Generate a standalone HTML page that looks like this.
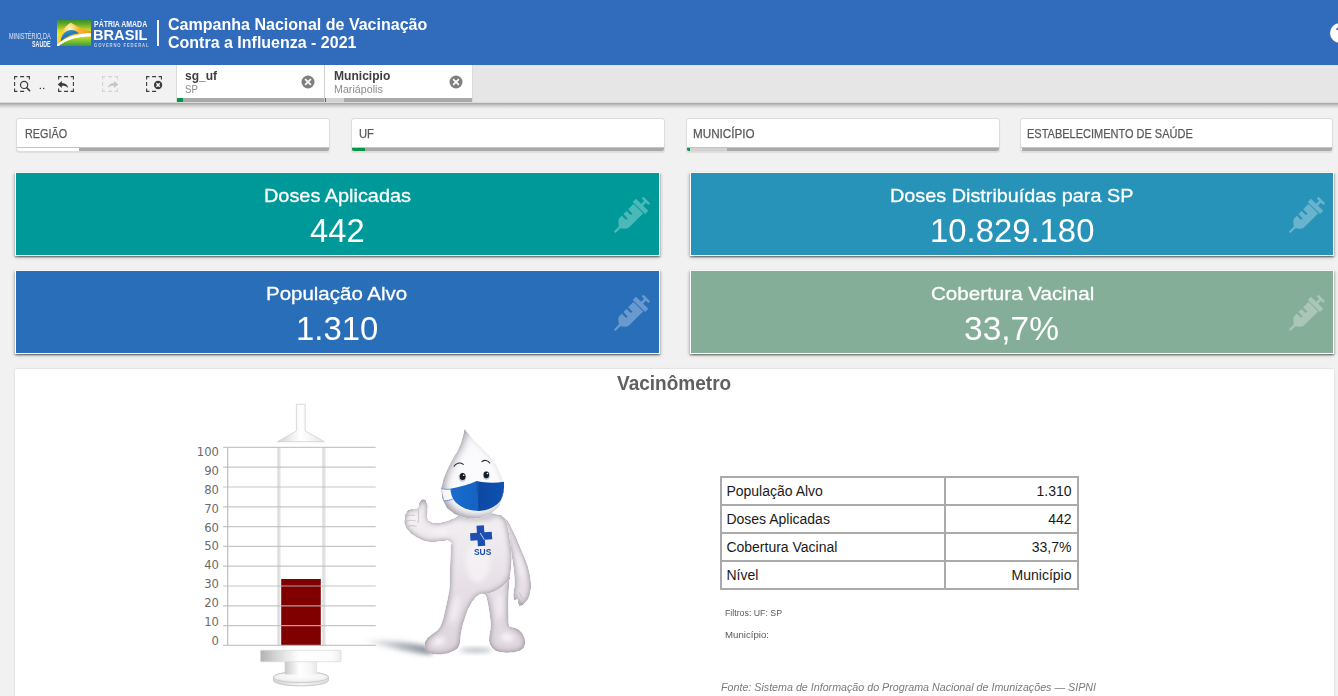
<!DOCTYPE html>
<html lang="pt-BR"><head><meta charset="utf-8"><title>Campanha Nacional de Vacinação Contra a Influenza - 2021</title>
<style>
html,body{margin:0;padding:0}
body{width:1338px;height:696px;overflow:hidden;position:relative;background:#f1f1f1;font-family:"Liberation Sans",sans-serif;}
div,span,svg,table{box-sizing:border-box}
.abs{position:absolute}
.t{position:absolute;white-space:nowrap;line-height:1;transform-origin:0 0;display:block}
.hdr{position:absolute;left:0;top:0;width:1338px;height:65px;background:#316bbb}
.sel{position:absolute;left:0;top:65px;width:1338px;height:38px;background:#e6e6e6;border-bottom:1px solid #dcdcdc}
.selsh{position:absolute;left:0;top:103px;width:1338px;height:6px;background:linear-gradient(rgba(0,0,0,.33),rgba(0,0,0,.12) 50%,rgba(0,0,0,0))}
.sel .tools{position:absolute;left:0;top:0;width:177px;height:37px;background:#f2f2f2;border-right:1px solid #dbdbdb}
.item{position:absolute;top:0;height:37px;background:#fff}
.item .bar{position:absolute;left:0;right:0;bottom:0;height:4px;background:#a9a9a9}
.fb{position:absolute;top:118px;height:34px;background:#fff;border:1px solid #dcdcdc;border-radius:3px;overflow:hidden;box-shadow:0 1px 1px rgba(0,0,0,.08)}
.fb .bar{position:absolute;left:0;right:0;bottom:0;height:4px;background:#a9a9a9;border-top:1px solid #c4c4c4}
.fb .bar i{position:absolute;left:0;top:0;height:3px;display:block}
.kpi{position:absolute;height:84px;border:1px solid #fff;border-top-color:#fbf6f6;box-shadow:0 1.5px 1.5px rgba(0,0,0,.38),0 2px 4px rgba(0,0,0,.12),-2px 1px 2.5px rgba(0,0,0,.08),1.5px 1px 2px rgba(0,0,0,.07)}
.kpi svg{position:absolute;right:9px;top:23.8px;width:36px;height:36px;opacity:.3}
.panel{position:absolute;left:15px;top:369px;width:1319px;height:340px;background:#fff;box-shadow:0 0 2px rgba(0,0,0,.15)}
table.v{position:absolute;left:720px;top:476px;width:359px;height:114px;border-collapse:collapse;border:2px solid #aaa;font-size:14px;color:#1a1a1a}
table.v td{border:2px solid #aaa;padding:0 5px 0 4.4px;height:26px;line-height:16px;vertical-align:middle;white-space:nowrap}
table.v td.r{text-align:right;padding-right:5.5px}
</style></head>
<body>
<div class="hdr">
<svg class="abs" style="left:57px;top:20px" width="34.400" height="26" viewBox="0 0 34.400 26">
<defs>
<linearGradient id="fg" x1="0" y1="0" x2="0" y2="1"><stop offset="0" stop-color="#2b882f"/><stop offset=".2" stop-color="#69ad2b"/><stop offset=".42" stop-color="#d3dc22"/><stop offset=".55" stop-color="#f2e61e"/><stop offset="1" stop-color="#e8d820"/></linearGradient>
<linearGradient id="fy" gradientUnits="userSpaceOnUse" x1="0" y1="0" x2="34" y2="0"><stop offset="0" stop-color="#f9d22e"/><stop offset=".45" stop-color="#f9c63a"/><stop offset=".8" stop-color="#f5a92b"/><stop offset="1" stop-color="#f0921f"/></linearGradient>
<radialGradient id="fyh" gradientUnits="userSpaceOnUse" cx="12.500" cy="8.500" r="9"><stop offset="0" stop-color="#fff6d0" stop-opacity="1"/><stop offset=".5" stop-color="#ffe9a0" stop-opacity=".6"/><stop offset="1" stop-color="#fbd35a" stop-opacity="0"/></radialGradient>
<linearGradient id="fb" x1="0" y1="0" x2=".6" y2="1"><stop offset="0" stop-color="#2f9fd6"/><stop offset="1" stop-color="#1b55a0"/></linearGradient>
<linearGradient id="fl" x1="0" y1="0" x2="0" y2="1"><stop offset="0" stop-color="#c4dc2c"/><stop offset=".45" stop-color="#7fc034"/><stop offset="1" stop-color="#2f9638"/></linearGradient>
<filter id="fbl" x="-5%" y="-5%" width="110%" height="110%"><feGaussianBlur stdDeviation=".35"/></filter>
<clipPath id="fc"><rect width="34.400" height="26"/></clipPath>
</defs>
<g clip-path="url(#fc)"><g filter="url(#fbl)">
<rect x="-1" y="-1" width="36.400" height="28" fill="url(#fg)"/>
<path d="M-.5 25.500C1.500 15 7.500 6 13.800 2.700C20 6.500 27.500 10.200 34.900 11.800L34.900 13.500C20 13.500 8 18.500 -.5 26.500Z" fill="url(#fy)"/>
<path d="M-.5 25.500C1.500 15 7.500 6 13.800 2.700C20 6.500 27.500 10.200 34.900 11.800L34.900 13.500C20 13.500 8 18.500 -.5 26.500Z" fill="url(#fyh)"/>
<path d="M3.600 21.500C4.300 14.500 9 10 14.500 10C17.800 10 20.300 11.300 21.800 13.200C15 14.200 8.500 17 3.600 21.500Z" fill="url(#fb)"/>
<path d="M-.5 25.200C8 17.500 20 13.300 34.900 13L34.900 16.600C21 16.500 9 20 1.500 26.500L-.5 26.500Z" fill="#fff"/>
<path d="M1 26.500C9 20 21 16.500 34.900 16.600L34.900 27L1 27Z" fill="url(#fl)"/>
</g></g>
</svg>
<div class="abs" style="left:157px;top:20px;width:2px;height:26px;background:#f4f6fb"></div>
<div class="abs" style="left:1330px;top:23px;width:20px;height:20px;border-radius:50%;background:#fff"></div>
<span class="t" style="left:1335.30px;top:23.50px;font-size:15.26px;color:#316bbb;font-weight:bold;">?</span>
<span class="t" style="left:9.00px;top:32.20px;font-size:8.58px;color:#dfe7f5;transform:scaleX(0.6469);">MINISTÉRIO DA</span>
<span class="t" style="left:31.80px;top:40.60px;font-size:8.14px;color:#f3f6fc;font-weight:bold;transform:scaleX(0.6547);">SAÚDE</span>
<span class="t" style="left:94.30px;top:21.30px;font-size:8.28px;color:#f3f6fc;font-weight:bold;transform:scaleX(0.8410);">PÁTRIA AMADA</span>
<span class="t" style="left:93.36px;top:27.00px;font-size:15.55px;color:#fff;font-weight:bold;transform:scaleX(0.9395);">BRASIL</span>
<span class="t" style="left:94.20px;top:43.50px;font-size:4.80px;color:#c3d3ee;font-weight:bold;transform:scaleX(0.8722);letter-spacing:1px;">GOVERNO FEDERAL</span>
<span class="t" style="left:167.80px;top:16.00px;font-size:17.15px;color:#fff;font-weight:bold;transform:scaleX(0.9355);">Campanha Nacional de Vacinação</span>
<span class="t" style="left:167.80px;top:34.00px;font-size:17.15px;color:#fff;font-weight:bold;transform:scaleX(0.9333);">Contra a Influenza - 2021</span>
</div>
<div class="sel">
<div class="tools"><svg class="abs" style="left:0;top:0" width="176" height="38" viewBox="0 0 176 38">
<path d="M14.6 14.4V11.6H17.4M26.6 11.6H29.4V14.4M14.6 23.6V26.4H17.4M20.1 11.6H24.1M20.1 26.4H24.1M14.6 17.1V21.1" fill="none" stroke="#3d3a3f" stroke-width="1.1"/>
<circle cx="24.1" cy="19.9" r="3.6" fill="none" stroke="#3d3a3f" stroke-width="1.2"/><path d="M26.800 22.700L29.600 25.600" stroke="#3d3a3f" stroke-width="1.600" stroke-linecap="round"/>
<rect x="39.700" y="22.800" width="1.300" height="1.300" fill="#3d3a3f"/><rect x="43" y="22.800" width="1.300" height="1.300" fill="#3d3a3f"/>
<path d="M58.6 14.4V11.6H61.4M70.6 11.6H73.4V14.4M58.6 23.6V26.4H61.4M70.6 26.4H73.4V23.6M64.1 11.6H68.1M64.1 26.4H68.1M73.4 17.1V21.1" fill="none" stroke="#3d3a3f" stroke-width="1.1"/>
<path d="M57.700 19.400L61.900 15.900V18C65.800 18.100 67.900 20 68.100 23C66.700 21.300 65 20.800 61.900 20.800V22.900Z" fill="#3d3a3f"/>
<path d="M102.6 14.4V11.6H105.4M114.6 11.6H117.4V14.4M102.6 23.6V26.4H105.4M114.6 26.4H117.4V23.6M108.1 11.6H112.1M108.1 26.4H112.1M102.6 17.1V21.1" fill="none" stroke="#d8d0d8" stroke-width="1.1"/>
<path d="M118.300 19.400L114.100 15.900V18C110.200 18.100 108.100 20 107.900 23C109.300 21.300 111 20.800 114.100 20.800V22.900Z" fill="#c6c6c6"/>
<path d="M146.6 14.4V11.6H149.4M158.6 11.6H161.4V14.4M146.6 23.6V26.4H149.4M152.1 11.6H156.1M152.1 26.4H156.1M146.6 17.1V21.1" fill="none" stroke="#3d3a3f" stroke-width="1.1"/>
<circle cx="158.100" cy="20" r="4.150" fill="#3d3a3f"/><path d="M156.400 18.300l3.400 3.400M159.800 18.300l-3.400 3.400" stroke="#fff" stroke-width="1.350"/>
</svg></div>
<div class="item" style="left:177px;width:147px"><div class="bar"><div class="abs" style="left:0;top:0;width:6px;height:4px;background:#009845"></div></div><svg class="abs" style="left:124px;top:10px" width="14" height="14" viewBox="-7 -7 14 14"><circle r="6.5" fill="#7f7f7f"/><path d="M-2.900 -2.900L2.900 2.900M2.900 -2.900L-2.900 2.900" stroke="#fff" stroke-width="1.700"/></svg></div>
<div class="abs" style="left:324px;top:0;width:1px;height:37px;background:#d0d0d0"></div>
<div class="item" style="left:325px;width:147px"><div class="bar"><div class="abs" style="left:0;top:0;width:1px;height:4px;background:#009845"></div><div class="abs" style="left:1px;top:0;width:18px;height:4px;background:#d2d2d2"></div></div><svg class="abs" style="left:124px;top:10px" width="14" height="14" viewBox="-7 -7 14 14"><circle r="6.5" fill="#7f7f7f"/><path d="M-2.900 -2.900L2.900 2.900M2.900 -2.900L-2.900 2.900" stroke="#fff" stroke-width="1.700"/></svg></div>
<div class="abs" style="left:472px;top:0;width:1px;height:37px;background:#dadada"></div>
</div>
<div class="selsh"></div>
<span class="t" style="left:185.30px;top:69.00px;font-size:13.08px;color:#404040;font-weight:bold;transform:scaleX(0.9205);">sg_uf</span>
<span class="t" style="left:185.30px;top:84.00px;font-size:11.48px;color:#8c8c8c;transform:scaleX(0.8371);">SP</span>
<span class="t" style="left:333.90px;top:69.00px;font-size:13.08px;color:#404040;font-weight:bold;transform:scaleX(0.9224);">Municipio</span>
<span class="t" style="left:334.00px;top:84.00px;font-size:11.48px;color:#8c8c8c;transform:scaleX(0.9328);">Mariápolis</span>

<div class="fb" style="left:16px;width:314px"><div class="bar"><i style="width:62px;background:#fff"></i></div></div><span class="t" style="left:25.06px;top:128.00px;font-size:12.94px;color:#595959;transform:scaleX(0.8364);-webkit-text-stroke:.25px #595959;">REGIÃO</span>
<div class="fb" style="left:350.5px;width:314px"><div class="bar"><i style="width:13px;background:#009845"></i></div></div><span class="t" style="left:358.93px;top:128.00px;font-size:12.94px;color:#595959;transform:scaleX(0.8689);-webkit-text-stroke:.25px #595959;">UF</span>
<div class="fb" style="left:685.5px;width:314px"><div class="bar"><i style="width:3px;background:#009845"></i><i style="left:3px;width:37px;background:#d2d2d2"></i></div></div><span class="t" style="left:693.20px;top:128.00px;font-size:12.94px;color:#595959;transform:scaleX(0.9030);-webkit-text-stroke:.25px #595959;">MUNICÍPIO</span>
<div class="fb" style="left:1019.5px;width:313px"><div class="bar"><i style="width:1px;background:#fff"></i></div></div><span class="t" style="left:1027.15px;top:128.00px;font-size:12.94px;color:#595959;transform:scaleX(0.8496);-webkit-text-stroke:.25px #595959;">ESTABELECIMENTO DE SAÚDE</span>

<div class="kpi" style="left:15px;top:172px;width:645px;background:#009999"><svg viewBox="0 0 36 36"><g fill="#fff" stroke="none"><path transform="scale(.0703125)" d="M201.5 174.8l55.7 55.8c3.1 3.1 3.1 8.2 0 11.3l-11.3 11.3c-3.1 3.1-8.2 3.1-11.3 0l-55.7-55.8-45.3 45.3 55.8 55.8c3.1 3.1 3.1 8.2 0 11.3l-11.3 11.3c-3.1 3.1-8.2 3.1-11.3 0L111 265.2l-26.4 26.4c-17.3 17.3-25.6 41.100-23 65.400l7.100 63.600L2.300 487c-3.100 3.100-3.100 8.200 0 11.300l11.300 11.300c3.100 3.100 8.200 3.100 11.300 0l66.300-66.300 63.600 7.100c23.900 2.600 47.900-5.400 65.400-23l181.900-181.900-135.700-135.700-64.900 65z"/><path d="M17.7 8.75L27.24 18.29L29.100 16.430L19.560 6.890z"/><path d="M20.340 3.400L32.700 15.420" stroke="#fff" stroke-width="4.600" fill="none"/><path d="M31.900 3.850L26.540 9.440" stroke="#fff" stroke-width="2.700" fill="none"/><path d="M29.400 1.400L34.450 6.350" stroke="#fff" stroke-width="2.500" stroke-linecap="round" fill="none"/></g></svg></div><span class="t" style="left:263.66px;top:185.60px;font-size:19.04px;color:#fff;transform:scaleX(1.0447);-webkit-text-stroke:.3px #fff;">Doses Aplicadas</span><span class="t" style="left:310.30px;top:212.65px;font-size:34.01px;color:#fff;transform:scaleX(0.9620);">442</span>
<div class="kpi" style="left:690px;top:172px;width:644px;background:#2793b8"><svg style="right:8.4px" viewBox="0 0 36 36"><g fill="#fff" stroke="none"><path transform="scale(.0703125)" d="M201.5 174.8l55.7 55.8c3.1 3.1 3.1 8.2 0 11.3l-11.3 11.3c-3.1 3.1-8.2 3.1-11.3 0l-55.7-55.8-45.3 45.3 55.8 55.8c3.1 3.1 3.1 8.2 0 11.3l-11.3 11.3c-3.1 3.1-8.2 3.1-11.3 0L111 265.2l-26.4 26.4c-17.3 17.3-25.6 41.100-23 65.400l7.100 63.600L2.300 487c-3.100 3.100-3.100 8.200 0 11.300l11.300 11.300c3.100 3.100 8.200 3.100 11.300 0l66.300-66.300 63.600 7.100c23.900 2.600 47.900-5.400 65.400-23l181.900-181.900-135.700-135.700-64.900 65z"/><path d="M17.7 8.75L27.24 18.29L29.100 16.430L19.560 6.890z"/><path d="M20.340 3.400L32.700 15.420" stroke="#fff" stroke-width="4.600" fill="none"/><path d="M31.900 3.850L26.540 9.440" stroke="#fff" stroke-width="2.700" fill="none"/><path d="M29.400 1.400L34.450 6.350" stroke="#fff" stroke-width="2.500" stroke-linecap="round" fill="none"/></g></svg></div><span class="t" style="left:890.46px;top:185.60px;font-size:19.04px;color:#fff;transform:scaleX(1.0411);-webkit-text-stroke:.3px #fff;">Doses Distribuídas para SP</span><span class="t" style="left:929.97px;top:212.65px;font-size:34.01px;color:#fff;transform:scaleX(0.9662);">10.829.180</span>
<div class="kpi" style="left:15px;top:270px;width:645px;background:#296eb8"><svg viewBox="0 0 36 36"><g fill="#fff" stroke="none"><path transform="scale(.0703125)" d="M201.5 174.8l55.7 55.8c3.1 3.1 3.1 8.2 0 11.3l-11.3 11.3c-3.1 3.1-8.2 3.1-11.3 0l-55.7-55.8-45.3 45.3 55.8 55.8c3.1 3.1 3.1 8.2 0 11.3l-11.3 11.3c-3.1 3.1-8.2 3.1-11.3 0L111 265.2l-26.4 26.4c-17.3 17.3-25.6 41.100-23 65.400l7.100 63.600L2.300 487c-3.100 3.100-3.100 8.200 0 11.300l11.300 11.300c3.100 3.100 8.200 3.100 11.300 0l66.300-66.300 63.600 7.100c23.900 2.600 47.900-5.400 65.400-23l181.900-181.900-135.700-135.700-64.900 65z"/><path d="M17.7 8.75L27.24 18.29L29.100 16.430L19.560 6.890z"/><path d="M20.340 3.400L32.700 15.420" stroke="#fff" stroke-width="4.600" fill="none"/><path d="M31.900 3.850L26.540 9.440" stroke="#fff" stroke-width="2.700" fill="none"/><path d="M29.400 1.400L34.450 6.350" stroke="#fff" stroke-width="2.500" stroke-linecap="round" fill="none"/></g></svg></div><span class="t" style="left:266.22px;top:283.60px;font-size:19.04px;color:#fff;transform:scaleX(1.0760);-webkit-text-stroke:.3px #fff;">População Alvo</span><span class="t" style="left:296.27px;top:310.65px;font-size:34.01px;color:#fff;transform:scaleX(0.9675);">1.310</span>
<div class="kpi" style="left:690px;top:270px;width:644px;background:#84ae98"><svg style="right:8.4px" viewBox="0 0 36 36"><g fill="#fff" stroke="none"><path transform="scale(.0703125)" d="M201.5 174.8l55.7 55.8c3.1 3.1 3.1 8.2 0 11.3l-11.3 11.3c-3.1 3.1-8.2 3.1-11.3 0l-55.7-55.8-45.3 45.3 55.8 55.8c3.1 3.1 3.1 8.2 0 11.3l-11.3 11.3c-3.1 3.1-8.2 3.1-11.3 0L111 265.2l-26.4 26.4c-17.3 17.3-25.6 41.100-23 65.400l7.100 63.600L2.300 487c-3.100 3.100-3.100 8.200 0 11.300l11.300 11.300c3.100 3.100 8.200 3.100 11.300 0l66.300-66.300 63.600 7.100c23.900 2.600 47.900-5.400 65.400-23l181.900-181.900-135.700-135.700-64.900 65z"/><path d="M17.7 8.75L27.24 18.29L29.100 16.430L19.560 6.890z"/><path d="M20.340 3.400L32.700 15.420" stroke="#fff" stroke-width="4.600" fill="none"/><path d="M31.900 3.850L26.540 9.440" stroke="#fff" stroke-width="2.700" fill="none"/><path d="M29.400 1.400L34.450 6.350" stroke="#fff" stroke-width="2.500" stroke-linecap="round" fill="none"/></g></svg></div><span class="t" style="left:930.80px;top:283.60px;font-size:19.04px;color:#fff;transform:scaleX(1.0822);-webkit-text-stroke:.3px #fff;">Cobertura Vacinal</span><span class="t" style="left:963.91px;top:310.65px;font-size:34.01px;color:#fff;transform:scaleX(0.9856);">33,7%</span>

<div class="panel"></div>
<span class="t" style="left:616.90px;top:373.50px;font-size:19.33px;color:#606060;font-weight:bold;transform:scaleX(0.9845);">Vacinômetro</span>
<svg class="abs" style="left:150px;top:395px" width="450" height="301" viewBox="150 395 450 301"><defs>
<linearGradient id="ndl" x1="0" x2="1" y1="0" y2="0"><stop offset="0" stop-color="#d2d2d2"/><stop offset=".3" stop-color="#efefef"/><stop offset=".5" stop-color="#ffffff"/><stop offset=".7" stop-color="#f6f6f6"/><stop offset="1" stop-color="#e4e4e4"/></linearGradient>
<linearGradient id="wall" x1="0" x2="1" y1="0" y2="0"><stop offset="0" stop-color="#e9e9e9"/><stop offset=".5" stop-color="#dcdcdc"/><stop offset="1" stop-color="#f0f0f0"/></linearGradient>
<linearGradient id="flange" x1="0" x2="1" y1="0" y2="0"><stop offset="0" stop-color="#b2b2b2"/><stop offset=".2" stop-color="#d6d6d6"/><stop offset=".48" stop-color="#ffffff"/><stop offset=".9" stop-color="#fbfbfb"/><stop offset="1" stop-color="#ececec"/></linearGradient>
<linearGradient id="rod" x1="0" x2="1" y1="0" y2="0"><stop offset="0" stop-color="#c9c9c9"/><stop offset=".45" stop-color="#ffffff"/><stop offset=".8" stop-color="#f6f6f6"/><stop offset="1" stop-color="#e6e6e6"/></linearGradient>
<radialGradient id="plate" cx=".5" cy=".4" r=".6"><stop offset="0" stop-color="#ffffff"/><stop offset=".7" stop-color="#f3f3f3"/><stop offset="1" stop-color="#e2e2e2"/></radialGradient>
<linearGradient id="rim" x1="0" x2="1" y1="0" y2="0"><stop offset="0" stop-color="#d4d4d4"/><stop offset=".5" stop-color="#f4f4f4"/><stop offset="1" stop-color="#dedede"/></linearGradient>
<filter id="blur3" x="-20%" y="-80%" width="140%" height="260%"><feGaussianBlur stdDeviation="2.4"/></filter>
<filter id="soft" x="-5%" y="-5%" width="110%" height="110%"><feGaussianBlur stdDeviation="0.45"/></filter>
<filter id="inner" x="-10%" y="-10%" width="120%" height="120%">
  <feGaussianBlur in="SourceAlpha" stdDeviation="3.4" result="b"/>
  <feComposite in="SourceAlpha" in2="b" operator="arithmetic" k1="0" k2="1.25" k3="-1.25" k4="0" result="edge"/>
  <feFlood flood-color="#8d8290" result="c"/>
  <feComposite in="c" in2="edge" operator="in" result="shade"/>
  <feMerge><feMergeNode in="SourceGraphic"/><feMergeNode in="shade"/></feMerge>
</filter>
<filter id="innerh" x="-10%" y="-10%" width="120%" height="120%">
  <feGaussianBlur in="SourceAlpha" stdDeviation="4.2" result="b"/>
  <feOffset in="b" dx="2.5" dy="-2.5" result="bo"/>
  <feComposite in="SourceAlpha" in2="bo" operator="arithmetic" k1="0" k2="1.15" k3="-1.15" k4="0" result="edge"/>
  <feFlood flood-color="#9a96a2" result="c"/>
  <feComposite in="c" in2="edge" operator="in" result="shade"/>
  <feMerge><feMergeNode in="SourceGraphic"/><feMergeNode in="shade"/></feMerge>
</filter>
<linearGradient id="mask" gradientUnits="userSpaceOnUse" x1="450" x2="505" y1="0" y2="0"><stop offset="0" stop-color="#1b6ccc"/><stop offset=".5" stop-color="#1763c2"/><stop offset=".53" stop-color="#0d49a3"/><stop offset="1" stop-color="#1252b2"/></linearGradient>
<linearGradient id="shg" gradientUnits="userSpaceOnUse" x1="366" x2="430" y1="0" y2="0"><stop offset="0" stop-color="#8a919c" stop-opacity=".15"/><stop offset=".5" stop-color="#8a919c" stop-opacity=".6"/><stop offset="1" stop-color="#7d8490" stop-opacity=".95"/></linearGradient>
<linearGradient id="bodyg" gradientUnits="userSpaceOnUse" x1="470" y1="510" x2="470" y2="655"><stop offset="0" stop-color="#f3f0f3"/><stop offset=".55" stop-color="#e6e0e6"/><stop offset="1" stop-color="#ddd5dc"/></linearGradient>
</defs><path d="M296.4 404.2H305.2V431L324.4 441.700H277.400L296.400 431Z" fill="url(#ndl)" stroke="#d0d0d0" stroke-width=".8" stroke-linejoin="round"/>
<rect x="277" y="447.4" width="3.8" height="198.0" fill="url(#wall)"/>
<rect x="322" y="447.4" width="3.8" height="198.0" fill="url(#wall)"/>
<rect x="281.2" y="579" width="39.6" height="66.4" fill="#800000"/>
<path d="M223 447.40H375.7" stroke="#bdbdbd" stroke-width="1.2" opacity=".85"/>
<path d="M223 467.20H375.7" stroke="#bdbdbd" stroke-width="1.2" opacity=".85"/>
<path d="M223 487.00H375.7" stroke="#bdbdbd" stroke-width="1.2" opacity=".85"/>
<path d="M223 506.80H375.7" stroke="#bdbdbd" stroke-width="1.2" opacity=".85"/>
<path d="M223 526.60H375.7" stroke="#bdbdbd" stroke-width="1.2" opacity=".85"/>
<path d="M223 546.40H375.7" stroke="#bdbdbd" stroke-width="1.2" opacity=".85"/>
<path d="M223 566.20H375.7" stroke="#bdbdbd" stroke-width="1.2" opacity=".85"/>
<path d="M223 586.00H375.7" stroke="#bdbdbd" stroke-width="1.2" opacity=".85"/>
<path d="M223 605.80H375.7" stroke="#bdbdbd" stroke-width="1.2" opacity=".85"/>
<path d="M223 625.60H375.7" stroke="#bdbdbd" stroke-width="1.2" opacity=".85"/>
<path d="M223 645.40H375.7" stroke="#bdbdbd" stroke-width="1.2" opacity=".85"/>
<path d="M227.7 447.4V645.4" stroke="#bdbdbd" stroke-width="1.2"/>
<text x="218.9" y="455.85" text-anchor="end" font-family="DejaVu Sans,Liberation Sans,sans-serif" font-size="11.6" fill="#6a6a6a">100</text>
<text x="218.9" y="474.77" text-anchor="end" font-family="DejaVu Sans,Liberation Sans,sans-serif" font-size="11.6" fill="#6a6a6a">90</text>
<text x="218.9" y="493.69" text-anchor="end" font-family="DejaVu Sans,Liberation Sans,sans-serif" font-size="11.6" fill="#6a6a6a">80</text>
<text x="218.9" y="512.61" text-anchor="end" font-family="DejaVu Sans,Liberation Sans,sans-serif" font-size="11.6" fill="#6a6a6a">70</text>
<text x="218.9" y="531.53" text-anchor="end" font-family="DejaVu Sans,Liberation Sans,sans-serif" font-size="11.6" fill="#6a6a6a">60</text>
<text x="218.9" y="550.45" text-anchor="end" font-family="DejaVu Sans,Liberation Sans,sans-serif" font-size="11.6" fill="#6a6a6a">50</text>
<text x="218.9" y="569.37" text-anchor="end" font-family="DejaVu Sans,Liberation Sans,sans-serif" font-size="11.6" fill="#6a6a6a">40</text>
<text x="218.9" y="588.29" text-anchor="end" font-family="DejaVu Sans,Liberation Sans,sans-serif" font-size="11.6" fill="#6a6a6a">30</text>
<text x="218.9" y="607.21" text-anchor="end" font-family="DejaVu Sans,Liberation Sans,sans-serif" font-size="11.6" fill="#6a6a6a">20</text>
<text x="218.9" y="626.13" text-anchor="end" font-family="DejaVu Sans,Liberation Sans,sans-serif" font-size="11.6" fill="#6a6a6a">10</text>
<text x="218.9" y="645.05" text-anchor="end" font-family="DejaVu Sans,Liberation Sans,sans-serif" font-size="11.6" fill="#6a6a6a">0</text>
<path d="M273.4 677.2C273.4 674.200 285.700 671.800 300.900 671.800C316.100 671.800 328.400 674.200 328.400 677.200V680.400C328.400 683.400 316.100 685.900 300.900 685.900C285.700 685.900 273.400 683.400 273.400 680.400Z" fill="url(#rim)" stroke="#c2c2c2" stroke-width=".9"/>
<ellipse cx="300.900" cy="677.200" rx="27.500" ry="5.400" fill="url(#plate)" stroke="#c8c8c8" stroke-width=".9"/>
<rect x="284.700" y="661.200" width="32.400" height="13.400" rx="1" fill="url(#rod)"/>
<rect x="260.500" y="650.300" width="80.500" height="11.400" rx=".8" fill="url(#flange)" stroke="#d9d9d9" stroke-width=".7"/><path d="M366 640.500C392 640 414 642.500 432 647.500L432 654.500C412 653.500 390 647.500 366 641.500Z" fill="url(#shg)" filter="url(#blur3)"/>
<ellipse cx="476" cy="650.2" rx="16" ry="2" fill="#868d98" opacity=".7" filter="url(#blur3)"/>
<g filter="url(#soft)">
<path filter="url(#inner)" fill="url(#bodyg)" d="M499 515.5C500.9 513.2 502.3 516.6 505.6 519.1C508.9 521.6 507 520 509 523C511 526 509.4 523.9 511.6 528.2C513.8 532.5 513 530.5 515.5 536C518 541.5 516.7 538.8 519.2 544.8C521.7 550.8 520.5 548 523 554C525.5 560 524.7 557.2 526.7 562.9C528.7 568.6 527.7 565.5 529 571C530.3 576.5 529.8 574.5 530.5 579.5C531.2 584.5 531.1 581.8 531 586C530.9 590.2 531 588.2 530.2 592C529.4 595.8 530.2 594.2 528.6 597.5C527 600.8 528 599.3 525.5 602C523 604.7 523.4 605.1 521 605.6C518.6 606.1 519.5 605.5 518.3 603.5C517.1 601.5 518.6 600.7 517.4 599.5C516.2 598.3 516.1 601 514.8 600C513.5 599 513.8 599.5 513.5 596.5C513.2 593.5 513.4 594.8 513.8 591C514.2 587.2 514.5 588.8 514.8 585C515.1 581.2 515 585.2 514.6 579.5C514.2 573.8 514.5 576.1 513.5 568C512.5 559.9 512.9 563 511.6 555.3C510.3 547.6 511.4 551.4 509.5 545C507.6 538.6 509.2 542.3 506 536C502.8 529.7 502.3 532.8 500 526C497.7 519.2 497.1 517.8 499 515.5Z"/>
<path filter="url(#inner)" fill="url(#bodyg)" d="M484 588C480.8 594.4 485.2 592 486.5 597.3C487.8 602.6 487.1 599.4 488 604C488.9 608.6 488.4 606 489.2 611C490 616 489.8 613.5 490.3 619C490.8 624.5 490.8 622.7 490.6 627.4C490.4 632.1 490.3 629.4 489.8 633C489.3 636.6 489.3 635.3 489.2 638.3C489.1 641.3 488.9 639.6 489.4 642C489.9 644.4 489.4 643.3 490.8 645.6C492.2 647.9 491.3 647.1 493.5 649C495.7 650.9 493.9 650.1 497.4 651.3C500.9 652.5 499.5 652.1 504 652.5C508.5 652.9 506.7 652.9 511 652.6C515.3 652.3 513.3 652.6 517 651.5C520.7 650.4 519.5 651.2 522 649.2C524.5 647.2 523.5 648.2 524.5 645.5C525.5 642.8 525.3 644.2 525 641C524.7 637.8 525.1 639.2 523.6 636C522.1 632.8 523 634 520.6 631.5C518.2 629 519.7 630.1 516.5 628.5C513.3 626.9 513.5 628 511 626.7C508.5 625.4 509.8 628.5 509 624.6C508.2 620.7 508.7 621.8 508.5 615C508.3 608.2 508.3 611.1 508.3 604.1C508.3 597.1 508.4 600.8 508.6 594C508.8 587.2 509.2 589.7 509 583.7C508.8 577.7 512.3 577.9 508 576C503.7 574.1 504 574 496 578C488 582 487.2 581.6 484 588Z"/>
<path filter="url(#inner)" fill="url(#bodyg)" d="M459.5 514.5C455.5 516 459.2 515.5 456 517.3C452.8 519.1 454.1 518.3 449.8 519.9C445.5 521.5 447.3 521 443 522C438.7 523 441 523 437 522.9C433 522.8 434.2 523.6 431 521.8C427.8 520 428.5 521.5 427.4 517.6C426.3 513.7 427.7 514.7 427.6 510C427.5 505.3 428.3 507 427 503.5C425.7 500 426.1 499.7 423.6 499.4C421.1 499.1 421.3 500 419.5 502.5C417.7 505 419.8 504.9 418.3 507C416.8 509.1 417.9 507.9 415.1 508.8C412.3 509.7 412.9 508.4 410 509.6C407.1 510.8 408.3 509.3 406.5 512.5C404.7 515.7 404.8 514.6 404.5 519.1C404.2 523.6 404 522 405.5 526C407 530 406.2 528 409 531.2C411.8 534.4 410.5 533 414 535.5C417.5 538 415.2 536.7 419.6 538.7C424 540.7 422.4 540.5 427.2 541.6C432 542.7 429.4 542.1 434 542C438.6 541.9 435.7 541.5 441 541.3C446.3 541.1 446.6 539.3 449.8 541.5C453 543.7 450.4 543.4 450.6 548C450.8 552.6 450.6 550 450.5 555.3C450.4 560.6 450.4 558 450.2 564C450 570 450 565.9 449.8 573.4C449.6 580.9 450.1 578.9 449.6 586.4C449.1 593.9 449.3 589.6 448.2 596C447.1 602.4 447.5 599.5 446.2 605.5C444.9 611.5 445.7 608.5 444.3 614C442.9 619.5 444 617 442.1 621.9C440.2 626.8 441.2 625.2 438.7 628.7C436.2 632.2 437.2 630.2 434.5 632.5C431.8 634.8 433.2 633.2 430.5 635.5C427.8 637.8 428.4 636.5 426.5 639.5C424.6 642.5 425.2 641.2 424.8 644.5C424.4 647.8 424 646.7 425.2 649.5C426.4 652.3 424.5 651.2 428.5 652.8C432.5 654.4 431.8 654.1 437.3 654.4C442.8 654.7 440.4 654.6 445 653.8C449.6 653 447.5 653.2 451 651.9C454.5 650.6 453 651.6 455.5 649.8C458 648 457 649.4 458.6 646.5C460.2 643.6 459.5 644.7 460.2 641C460.9 637.3 460 640.2 460.7 635.5C461.4 630.8 461 632.4 462.3 627C463.6 621.6 463 624.2 464.6 619.2C466.2 614.2 465.2 616.6 467 612C468.8 607.4 467.8 609.7 470.1 605.5C472.4 601.3 471.3 602.9 474 599.5C476.7 596.1 476 597.1 478.3 595.3C480.6 593.5 478.4 594.5 481 594C483.6 593.5 482.3 594.4 486 593.8C489.7 593.2 487.3 594.2 492 592.3C496.7 590.4 495.7 590.8 500 588C504.3 585.2 502.1 586.8 505 584C507.9 581.2 506.8 583.5 508.6 579.5C510.4 575.5 509.6 576.8 510.5 572C511.4 567.2 510.9 570.6 511.3 565C511.7 559.4 511.7 561 511.6 555.3C511.5 549.6 511.5 552.8 511 548C510.5 543.2 510.9 547 510 541C509.1 535 509.8 536.8 508.3 530C506.8 523.2 507.7 525 505.6 520.5C503.5 516 505 518.6 502 516.5C499 514.4 501.2 515.4 496.5 514.2C491.8 513 494.2 513.4 488 512.8C481.8 512.2 484.7 512.3 478 512.3C471.3 512.3 474.2 512.1 468 512.8C461.8 513.5 463.5 513 459.5 514.5Z"/>
<ellipse cx="439" cy="641.5" rx="6.5" ry="4" transform="rotate(-25 439 641.5)" fill="#fbf9fb" opacity="0.8" filter="url(#blur3)"/>
<ellipse cx="507" cy="637.5" rx="7" ry="4.2" transform="rotate(10 507 637.5)" fill="#fbf9fb" opacity="0.8" filter="url(#blur3)"/>
<ellipse cx="455" cy="610" rx="4" ry="14" transform="rotate(14 455 610)" fill="#fbf9fb" opacity="0.55" filter="url(#blur3)"/>
<ellipse cx="499.5" cy="606" rx="4" ry="13" transform="rotate(0 499.5 606)" fill="#fbf9fb" opacity="0.5" filter="url(#blur3)"/>
<ellipse cx="478" cy="562" rx="12" ry="20" transform="rotate(0 478 562)" fill="#fbf9fb" opacity="0.6" filter="url(#blur3)"/>
<ellipse cx="440" cy="531.5" rx="9" ry="3.5" transform="rotate(12 440 531.5)" fill="#fbf9fb" opacity="0.5" filter="url(#blur3)"/>
<ellipse cx="412" cy="519" rx="3.5" ry="5" transform="rotate(0 412 519)" fill="#fbf9fb" opacity="0.5" filter="url(#blur3)"/>
<ellipse cx="521" cy="566" rx="2.5" ry="14" transform="rotate(-14 521 566)" fill="#fbf9fb" opacity="0.45" filter="url(#blur3)"/>
<path d="M516.5 594.500C517.500 597 518.500 599 520 601M519.500 592.500C520.500 595.500 521.800 597.800 523.500 599.500" stroke="#b9afba" stroke-width=".7" fill="none"/>
<path d="M406 516.500C409 515 412 514.800 415 515.500M405.800 521.500C409 520 412.500 520 415.500 521M407.500 526.500C410.500 525.300 413.500 525.300 416.500 526.500M418 509C418.800 513 419 518 418 523" stroke="#bcb3bd" stroke-width=".7" fill="none"/>
<ellipse cx="476" cy="517.500" rx="19" ry="3.200" fill="#a59fab" opacity=".55" filter="url(#blur3)"/>
<path filter="url(#innerh)" fill="#fbfafc" d="M464.7 428.7C463.9 431.8 464.4 431.5 462.4 438.1C460.4 444.7 461.9 441.6 458.6 448.6C455.3 455.6 456.6 451.6 452.6 459.2C448.6 466.8 450 463.3 446.6 471.3C443.2 479.3 444.2 476.3 442.5 483.3C440.8 490.3 441 485.9 441.6 492.4C442.2 498.9 441.1 496.6 444.3 502.9C447.5 509.2 445.8 506.9 451.1 511.2C456.4 515.5 453.2 513.6 460.2 515.9C467.2 518.2 464.2 517.8 472.2 518C480.2 518.2 476.8 519 484.3 516.5C491.8 514 489.1 515.5 494.8 510.5C500.5 505.5 498.3 507.9 501.4 501.4C504.5 494.9 503.5 497.4 504 490.9C504.5 484.4 504.5 488.3 503 481.8C501.5 475.3 502.6 478.3 499.4 471.3C496.2 464.3 498.3 467.7 493.3 460.7C488.3 453.7 490.3 456.7 484.3 450.2C478.3 443.7 480.5 446.6 475.2 441.1C469.9 435.6 471.9 437.7 468.4 433.6C464.9 429.5 465.9 430.3 464.7 428.7Z"/>
<path d="M441.4 488.600C444.500 489.400 447.500 489.500 450.600 489.100L452.800 499C450 500.200 447 500.800 444.200 500.800Z" fill="#fdfdff" opacity=".85"/>
<path d="M441.400 488.600C444.500 489.400 447.500 489.500 450.600 489.100M444.200 500.800C447 500.800 450 500.200 452.800 499" stroke="#4d86d6" stroke-width=".8" fill="none"/>
<path d="M504 482C503.300 483 502.600 483.600 501.800 484M503.800 491.500C503 492.800 502 493.800 501 494.500" stroke="#4d86d6" stroke-width=".8" fill="none"/>
<path fill="url(#mask)" d="M450.400 488.700C460 487 469 484.800 476.700 481.100C485 483 494.500 483.500 503.900 481.700C504.600 488 503.500 494.500 500.900 499.900C497 505.500 490 509.500 482.800 510.600C479.500 511 477 511 473.700 510.600C466 509.800 459.500 506 454.900 501.400C452.300 498 450.600 493.500 450.400 488.700Z"/>
<path d="M476.700 481.100C477.800 491 479 501 480.300 510.800" stroke="#0b3f93" stroke-width=".7" fill="none" opacity=".8"/>
<ellipse cx="462.400" cy="477.300" rx="3.800" ry="4.600" fill="#b9cfe2"/><ellipse cx="462.600" cy="476.600" rx="2.900" ry="3.500" fill="#171a24"/><circle cx="463.700" cy="475.200" r=".8" fill="#fff"/>
<ellipse cx="486.500" cy="475.500" rx="3.500" ry="4.300" fill="#b9cfe2"/><ellipse cx="486.300" cy="474.900" rx="2.700" ry="3.300" fill="#171a24"/><circle cx="487.400" cy="473.500" r=".8" fill="#fff"/>
<path d="M454.100 466.200C455.800 463.300 459.800 461.800 463.300 464.400" stroke="#26262c" stroke-width="1.100" fill="none" stroke-linecap="round"/>
<path d="M482 461.600C484.300 459.600 488 460 489.700 463" stroke="#26262c" stroke-width="1.100" fill="none" stroke-linecap="round"/>
<g transform="rotate(-4 481 536)" fill="#1d4fb0"><rect x="477.200" y="525.500" width="7.400" height="20.500"/><rect x="470.200" y="532.500" width="21.800" height="7.600"/></g>
<path d="M480.200 533L484.400 539.800" stroke="#eef2fc" stroke-width=".8"/>
<text x="473.900" y="555.400" font-family="Liberation Sans,sans-serif" font-weight="bold" font-size="9.800" fill="#1d4fb0" textLength="17.400" lengthAdjust="spacingAndGlyphs">SUS</text>
</g></svg>
<table class="v"><tbody>
<tr><td style="width:213px">População Alvo</td><td class="r">1.310</td></tr>
<tr><td>Doses Aplicadas</td><td class="r">442</td></tr>
<tr><td>Cobertura Vacinal</td><td class="r">33,7%</td></tr>
<tr><td>Nível</td><td class="r">Município</td></tr>
</tbody></table>
<span class="t" style="left:724.60px;top:607.90px;font-size:9.88px;color:#595959;transform:scaleX(0.8885);">Filtros: UF: SP</span>
<span class="t" style="left:724.60px;top:630.00px;font-size:9.88px;color:#595959;transform:scaleX(0.9760);">Município:</span>
<span class="t" style="left:721.20px;top:681.70px;font-size:11.34px;color:#7b7b7b;font-style:italic;transform:scaleX(0.9439);">Fonte: Sistema de Informação do Programa Nacional de Imunizações — SIPNI</span>
</body></html>
